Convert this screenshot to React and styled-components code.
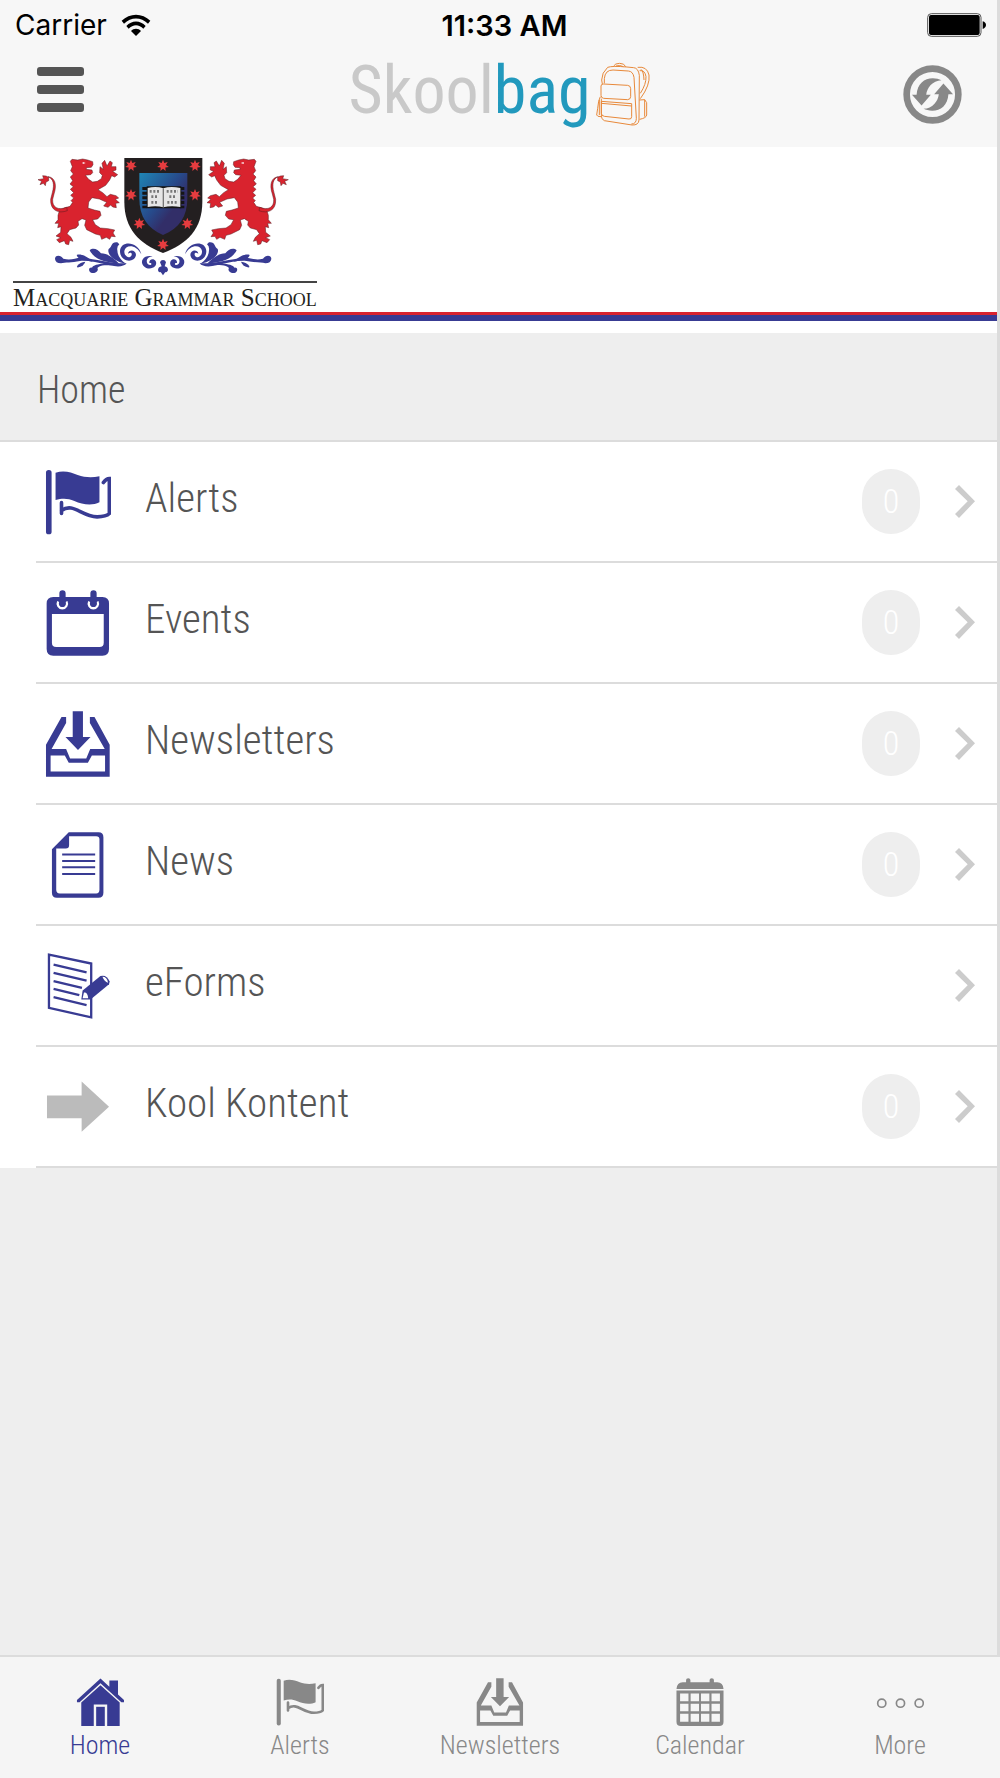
import React from "react"
import styled, { createGlobalStyle } from "styled-components"

const GlobalStyle = createGlobalStyle`
  * {
    box-sizing: border-box;
  }
  body {
    margin: 0;
    background: #eee;
    color: #555;
    font-family: "Roboto Condensed", Roboto, sans-serif;
    font-weight: 300;
  }
  svg {
    display: block;
    flex: none;
  }
`

const Screen = styled.div`
  display: flex;
  flex-direction: column;
  min-height: 100vh;
`

const Pane = styled.div`
  flex: 1;
  display: flex;
  flex-direction: column;
  border-right: 3px solid #dcdcdc;
`

const Header = styled.header`
  background: #f7f7f7;
  padding-bottom: 9px;
`

const StatusBar = styled.div`
  display: grid;
  grid-template-columns: 1fr auto 1fr;
  align-items: center;
  height: 50px;
  padding: 0 11px 0 15px;
  color: #000;
  font-family: Inter, sans-serif;
  font-size: 28px;
  font-weight: 400;
`

const Carrier = styled.div`
  display: flex;
  align-items: center;
  gap: 14px;
`

const Clock = styled.div`
  padding-left: 8px;
  font-size: 29px;
  font-weight: 600;
`

const StatusEnd = styled.div`
  justify-self: end;
`

const Toolbar = styled.div`
  display: grid;
  grid-template-columns: 1fr auto 1fr;
  align-items: center;
  height: 88px;
  padding: 0 35px 0 37px;
`

const IconButton = styled.button`
  justify-self: ${props => props.$align};
  padding: 0;
  border: 0;
  background: none;
  color: ${props => props.$color};
  cursor: pointer;
`

const Brand = styled.a`
  display: flex;
  align-items: center;
  gap: 4px;
  color: #c9c9c9;
  font-size: 66px;
  font-weight: 400;
  line-height: 80px;
  text-decoration: none;
`

const BrandName = styled.span`
  padding-bottom: 6px;
`

const BrandAccent = styled.span`
  color: #2299bd;
`

const Banner = styled.div`
  background: #fff;
  padding: 8px 0 12px;
`

const School = styled.div`
  display: inline-block;
  padding: 0 10px;
  vertical-align: top;
`

const SchoolName = styled.div`
  margin: 2px 7px 0 3px;
  border-top: 2px solid #444;
  color: #231f20;
  font-family: "Liberation Serif", serif;
  font-size: 25px;
  font-weight: 400;
  font-variant: small-caps;
  line-height: 29px;
  white-space: nowrap;
`

const Stripe = styled.div`
  height: 9px;
  border-top: 3px solid #d9232e;
  background: #383b93;
`

const PageTitle = styled.h1`
  margin: 0;
  padding: 35px 37px 27px;
  border-bottom: 2px solid #dcdcdc;
  font-size: 38px;
  font-weight: 300;
  line-height: 45px;
`

const List = styled.ul`
  margin: 0;
  padding: 0 0 0 36px;
  background: #fff;
  list-style: none;
`

const Item = styled.li`
  border-bottom: 2px solid #dcdcdc;
`

const Row = styled.a`
  display: flex;
  align-items: center;
  height: 119px;
  padding: 0 22px 0 9px;
  color: inherit;
  text-decoration: none;
`

const RowIcon = styled.span`
  color: ${props => props.$color};
`

const RowLabel = styled.span`
  flex: 1;
  padding: 0 0 7px 34px;
  font-size: 41px;
  line-height: 48px;
`

const Badge = styled.span`
  width: 58px;
  height: 65px;
  margin-right: 35px;
  border-radius: 29px;
  background: #eee;
  color: #fff;
  font-size: 34px;
  line-height: 65px;
  text-align: center;
`

const TabBar = styled.nav`
  display: flex;
  height: 123px;
  border-top: 2px solid #dcdcdc;
  background: #f5f5f5;
`

const Tab = styled.a`
  flex: 1;
  display: flex;
  flex-direction: column;
  align-items: center;
  gap: 4px;
  padding-top: 21px;
  color: ${props => (props.$active ? "#383b93" : "#888")};
  font-size: 26px;
  line-height: 30px;
  text-decoration: none;
`

const Glyph = ({ size, children }) => (
  <svg width={size} height={size} viewBox="0 0 200 200" fill="currentColor" aria-hidden="true">
    {children}
  </svg>
)

const Flag = ({ size }) => (
  <Glyph size={size}>
    <rect x="3" y="3" width="17" height="195" rx="8" />
    <path d="M32 11C58 3 79 10 99 18C121 26 143 26 165 22V101C143 112 113 108 89 97C69 88 52 88 32 94Z" />
    <path
      d="M50 102V135M50 126C85 100 109 143 158 145C176 145 188 142 195 135V29Q185 29 177 41"
      fill="none"
      stroke="currentColor"
      strokeWidth="11"
      strokeLinecap="round"
    />
  </Glyph>
)

const EventPage = ({ size }) => (
  <Glyph size={size}>
    <path
      fillRule="evenodd"
      d="M25 21H174Q194 21 194 41V179Q194 199 174 199H25Q5 199 5 179V41Q5 21 25 21ZM21 73V160Q21 173 34 173H165Q178 173 178 160V73Z"
    />
    <path d="M40 35A14 14 0 1 0 65 35M134 35A14 14 0 1 0 159 35" fill="none" stroke="#fff" strokeWidth="7" />
    <path d="M53 10V42M147 10V42" stroke="currentColor" strokeWidth="19" strokeLinecap="round" />
  </Glyph>
)

const Inbox = ({ size }) => (
  <Glyph size={size}>
    <path
      fillRule="evenodd"
      d="M50 18H64V36L20 115H64L76 144H125L137 115H181L136 36V18H150L196 102V199H3V102ZM17 135V183H182V135H142L130 157H72L60 135Z"
    />
    <path d="M84 1H115V79H138L100 118L62 79H84Z" />
  </Glyph>
)

const Article = ({ size }) => (
  <Glyph size={size}>
    <path
      fillRule="evenodd"
      d="M72 1H162Q177 1 177 16V184Q177 199 162 199H36Q21 199 21 184V52ZM73 13V40Q73 50 63 50H34V175Q34 186 45 186H155Q165 186 165 175V22Q165 13 155 13Z"
    />
    <path d="M52 68H152M52 88H152M52 107H152M52 127H152" stroke="currentColor" strokeWidth="6" />
  </Glyph>
)

const Form = ({ size }) => (
  <Glyph size={size}>
    <path
      d="M12 5L140 32V195L12 166ZM26 35L126 59M26 60L126 84M26 85L112 106M26 109L104 128M26 134L126 158"
      fill="none"
      stroke="currentColor"
      strokeWidth="7"
    />
    <path d="M110 141L114 114L168 70Q186 64 196 86L194 95L138 141Z" />
    <path d="M114 137L118 120Q129 118 131 137ZM174 72Q188 72 191 90Q180 87 174 72Z" fill="#fff" />
  </Glyph>
)

const Arrow = ({ size }) => (
  <Glyph size={size}>
    <path d="M6 65H111V23L194 99L111 175V134H6Z" />
  </Glyph>
)

const House = ({ size }) => (
  <Glyph size={size}>
    <path d="M4 92L102 2L139 36V10H175V69L200 92V101H189L102 22L15 101H4Z" />
    <path d="M22 102L102 30L182 102V200H130V110H74V200H22Z" />
    <path d="M84 120H120V200H84Z" />
  </Glyph>
)

const Calendar = ({ size }) => (
  <Glyph size={size}>
    <path d="M2 46Q4 18 28 18H42V8Q42 1 51 1T60 8V18H140V8Q140 1 149 1T158 8V18H172Q196 18 198 46Z" />
    <path
      fillRule="evenodd"
      d="M2 52H198V182Q198 200 180 200H20Q2 200 2 182ZM17 65V97H52V65ZM61 65V97H96V65ZM104 65V97H139V65ZM148 65V97H183V65ZM17 107V139H52V107ZM61 107V139H96V107ZM104 107V139H139V107ZM148 107V139H183V107ZM17 149V182H52V149ZM61 149V182H96V149ZM104 149V182H139V149ZM148 149V182H183V149Z"
    />
  </Glyph>
)

const Dots = ({ size }) => (
  <Glyph size={size}>
    <g fill="none" stroke="currentColor" strokeWidth="7">
      <circle cx="24" cy="105" r="17" />
      <circle cx="102" cy="105" r="17" />
      <circle cx="180" cy="105" r="17" />
    </g>
  </Glyph>
)

const Chevron = () => (
  <svg width="20" height="33" viewBox="0 0 60 99" aria-hidden="true">
    <path d="M0 12L12 0L60 49L12 99L0 87L38 49Z" fill="#ccc" />
  </svg>
)

const Wifi = () => (
  <svg width="30" height="22" viewBox="0 0 90 66" aria-hidden="true">
    <path d="M2 20C26-4 64-4 88 20L81 29C60 8 30 8 9 29Z" />
    <path d="M16 36C32 18 58 18 74 36L67 44C54 30 36 30 23 44Z" />
    <path d="M30 51C38 42 52 42 60 51L45 66Z" />
  </svg>
)

const Battery = () => (
  <svg width="59" height="24" viewBox="0 0 177 72" aria-hidden="true">
    <rect x="2" y="2" width="160" height="68" rx="11" fill="none" stroke="#555" strokeWidth="3" />
    <rect x="6" y="6" width="152" height="60" rx="6" />
    <path d="M167 25Q177 28 177 36T167 48Z" />
  </svg>
)

const Bars = () => (
  <svg width="47" height="54" viewBox="0 0 47 54" fill="currentColor" aria-hidden="true">
    <rect width="47" height="9" rx="3" />
    <rect y="18" width="47" height="9" rx="3" />
    <rect y="36" width="47" height="9" rx="3" />
  </svg>
)

const swirl = "M-62 1H-48C-46-32-25-49 1-49C11-49 20-46 27-43C0-42-17-20-19 1H-5L-33 33Z"

const Refresh = () => (
  <svg width="59" height="59" viewBox="-89 -89 178 178" fill="currentColor" aria-hidden="true">
    <circle r="78" fill="none" stroke="currentColor" strokeWidth="20" />
    <path d={swirl} />
    <path d={swirl} transform="rotate(180)" />
  </svg>
)

const Backpack = () => (
  <svg width="56" height="65" viewBox="784 186 168 195" fill="none" stroke="#e8893a" strokeWidth="3" aria-hidden="true">
    <path d="M806 252L804 240Q804 218 822 202Q836 197 880 201L900 203Q914 204 917 226L916 360Q915 376 895 375L812 362Q802 358 803 345V296" />
    <path d="M812 250V236Q814 210 838 210L884 213Q898 214 901 232L908 355Q908 372 893 372" />
    <path d="M840 198Q844 190 858 190T876 200M847 198Q858 194 869 200" />
    <path d="M802 258Q802 252 810 252L882 256Q891 257 891 266V290Q891 298 882 299L810 295Q802 294 802 286Z" />
    <path d="M803 304L894 311V350Q894 358 886 357L812 349Q803 347 803 340ZM803 310L894 318" />
    <path d="M800 290Q794 300 792 325L789 345Q790 350 802 350M797 300V345" />
    <path d="M912 202Q940 198 946 225Q950 255 920 296M918 212Q934 210 937 230Q938 252 920 280M922 208Q930 214 931 240" />
    <path d="M917 300L933 299L939 308V345Q938 354 918 358M933 299V350" />
  </svg>
)

const Lion = () => (
  <g stroke="#5a1a20" strokeWidth="1.5" strokeLinejoin="round">
    <path
      d="M103 28L108 22L125 24L140 21L155 24L170 29L171 38L166 46L152 47L150 52L168 54L170 62L164 68L148 70L158 82L170 90L184 88L196 80L199 70L191 62L192 44L202 52L198 34L206 25L213 42L222 27L229 32L226 44L240 44L240 54L230 58L245 68L236 75L227 71L221 84L209 100L186 113L200 122L213 134L223 127L240 131L248 138L238 142L250 152L239 154L241 167L230 165L224 159L216 166L203 162L212 151L190 141L168 137L158 150L156 168L175 174L192 178L195 190L185 201L170 203L178 218L193 228L216 230L236 234L231 243L238 254L226 253L221 262L211 256L197 262L193 250L178 246L152 233L146 220L150 204L138 200L126 208L128 219L120 228L101 233L93 245L105 256L111 268L101 265L98 278L89 276L85 266L70 272L62 263L74 257L60 252L74 241L75 224L65 227L68 214L57 214L66 203L66 190L70 177L84 168L102 163L110 151L105 146L113 138L104 130L113 122L103 112L112 104L102 96L110 86L103 75L112 66L104 56L109 44Z"
      fill="#d9232e"
    />
    <path d="M92 166C66 176 48 166 50 142L54 126C64 96 56 76 36 74C52 80 56 96 49 122L44 142C42 176 68 186 94 176Z" fill="#d9232e" />
    <path d="M38 76L30 72L20 71L23 80L6 83L17 88L12 98L22 94L28 101L30 90L38 86Z" fill="#d9232e" />
    <path d="M140 30L149 33L140 36Z" fill="#fff" stroke="none" />
  </g>
)

const Flourish = () => (
  <g fill="#383b93" stroke="none">
    <path d="M165 342C164 330 182 328 190 341C215 348 225 337 246 338C290 342 330 356 380 355C372 366 350 366 330 361C290 352 260 345 240 348C215 353 195 352 183 355C172 355 166 350 165 342Z" />
    <path d="M230 330C242 325 262 334 278 350L262 347C246 346 234 342 230 330Z" />
    <path d="M269 316C280 306 294 314 303 325C322 325 340 338 358 356C325 352 285 348 269 316Z" />
    <path d="M352 292C332 290 338 304 326 312C320 326 340 350 378 356C360 344 352 330 352 316Q350 304 358 298Z" />
    <path d="M340 360C312 352 280 358 276 368C266 366 264 378 273 383C286 388 298 376 292 369C304 358 320 362 340 360Z" />
    <path d="M256 350Q240 352 232 362Q228 369 236 367Q252 362 256 350Z" />
    <path d="M424 328C414 288 362 286 360 318C360 352 404 356 408 330C408 314 386 312 384 326C392 320 398 324 394 332C388 342 372 334 373 318C376 298 408 296 424 328Z" />
    <path d="M458 334C434 328 418 346 430 362C446 380 476 366 467 348C460 338 446 344 448 354C456 352 456 360 450 360C436 358 436 336 458 334Z" />
  </g>
)

const STARS = [
  [393, 62],
  [489, 62],
  [585, 62],
  [393, 150],
  [585, 150],
  [418, 236],
  [562, 236],
  [489, 299],
]

const starPoints = Array.from({ length: 14 }, (_, i) => {
  const radius = i % 2 ? 9 : 18
  const angle = (Math.PI * i) / 7 - Math.PI / 2
  return `${radius * Math.cos(angle)},${radius * Math.sin(angle)}`
}).join(" ")

const Crest = () => (
  <svg width="310" height="124" viewBox="30 30 930 372" role="img" aria-label="School crest">
    <defs>
      <linearGradient id="field" x1="0" y1="0" x2="1" y2="1">
        <stop offset="0" stopColor="#1f86b5" />
        <stop offset="0.45" stopColor="#27498a" />
        <stop offset="0.65" stopColor="#322e68" />
      </linearGradient>
    </defs>
    {["", "translate(979 0) scale(-1 1)"].map(side => (
      <g key={side} transform={side}>
        <g transform="translate(108 21)">
          <Lion />
        </g>
        <Flourish />
      </g>
    ))}
    <path d="M480 352Q482 345 489 345T498 352L494 364Q504 366 504 376Q500 384 496 381L489 391L482 381Q476 384 474 376Q474 366 485 364Z" fill="#383b93" />
    <path d="M373 39H607V170C607 252 562 296 489 324C418 296 373 252 373 170Z" fill="#231f20" />
    <path d="M418 84H562V160C562 215 538 250 489 270C442 250 418 215 418 160Z" fill="url(#field)" />
    <path d="M440 124H544V190H440Z" fill="#151515" />
    <path d="M434 126V190M546 126V190" stroke="#151515" strokeWidth="14" strokeDasharray="9 5" />
    <path d="M443 129Q468 122 490 130Q512 122 541 129V186Q512 181 490 187Q468 181 443 186Z" fill="#e6e6e6" />
    <path d="M490 130V187" stroke="#777" strokeWidth="4" />
    <path
      d="M449 139H482M454 155H474M454 172H474M500 139H534M508 155H528M502 172H534"
      stroke="#777"
      strokeWidth="8"
      strokeDasharray="6 5"
    />
    {STARS.map(([x, y]) => (
      <polygon key={`${x}-${y}`} points={starPoints} transform={`translate(${x} ${y})`} fill="#e63c3f" />
    ))}
  </svg>
)

const items = [
  { label: "Alerts", icon: Flag, count: 0 },
  { label: "Events", icon: EventPage, count: 0 },
  { label: "Newsletters", icon: Inbox, count: 0 },
  { label: "News", icon: Article, count: 0 },
  { label: "eForms", icon: Form },
  { label: "Kool Kontent", icon: Arrow, count: 0, color: "#bbb" },
]

const tabs = [
  { label: "Home", icon: House, active: true },
  { label: "Alerts", icon: Flag },
  { label: "Newsletters", icon: Inbox },
  { label: "Calendar", icon: Calendar },
  { label: "More", icon: Dots },
]

export default function App() {
  return (
    <Screen>
      <GlobalStyle />
      <Pane>
        <Header>
          <StatusBar>
            <Carrier>
              Carrier
              <Wifi />
            </Carrier>
            <Clock>11:33 AM</Clock>
            <StatusEnd>
              <Battery />
            </StatusEnd>
          </StatusBar>
          <Toolbar>
            <IconButton $align="start" $color="#555" aria-label="Menu">
              <Bars />
            </IconButton>
            <Brand href="#home">
              <BrandName>
                Skool<BrandAccent>bag</BrandAccent>
              </BrandName>
              <Backpack />
            </Brand>
            <IconButton $align="end" $color="#888" aria-label="Refresh">
              <Refresh />
            </IconButton>
          </Toolbar>
        </Header>
        <Banner>
          <School>
            <Crest />
            <SchoolName>Macquarie Grammar School</SchoolName>
          </School>
          <Stripe />
        </Banner>
        <PageTitle>Home</PageTitle>
        <List>
          {items.map(item => (
            <Item key={item.label}>
              <Row href={`#${item.label}`}>
                <RowIcon $color={item.color || "#383b93"}>
                  <item.icon size={66} />
                </RowIcon>
                <RowLabel>{item.label}</RowLabel>
                {item.count !== undefined ? <Badge>{item.count}</Badge> : null}
                <Chevron />
              </Row>
            </Item>
          ))}
        </List>
      </Pane>
      <TabBar>
        {tabs.map(tab => (
          <Tab key={tab.label} href={`#${tab.label}`} $active={tab.active}>
            <tab.icon size={48} />
            {tab.label}
          </Tab>
        ))}
      </TabBar>
    </Screen>
  )
}
